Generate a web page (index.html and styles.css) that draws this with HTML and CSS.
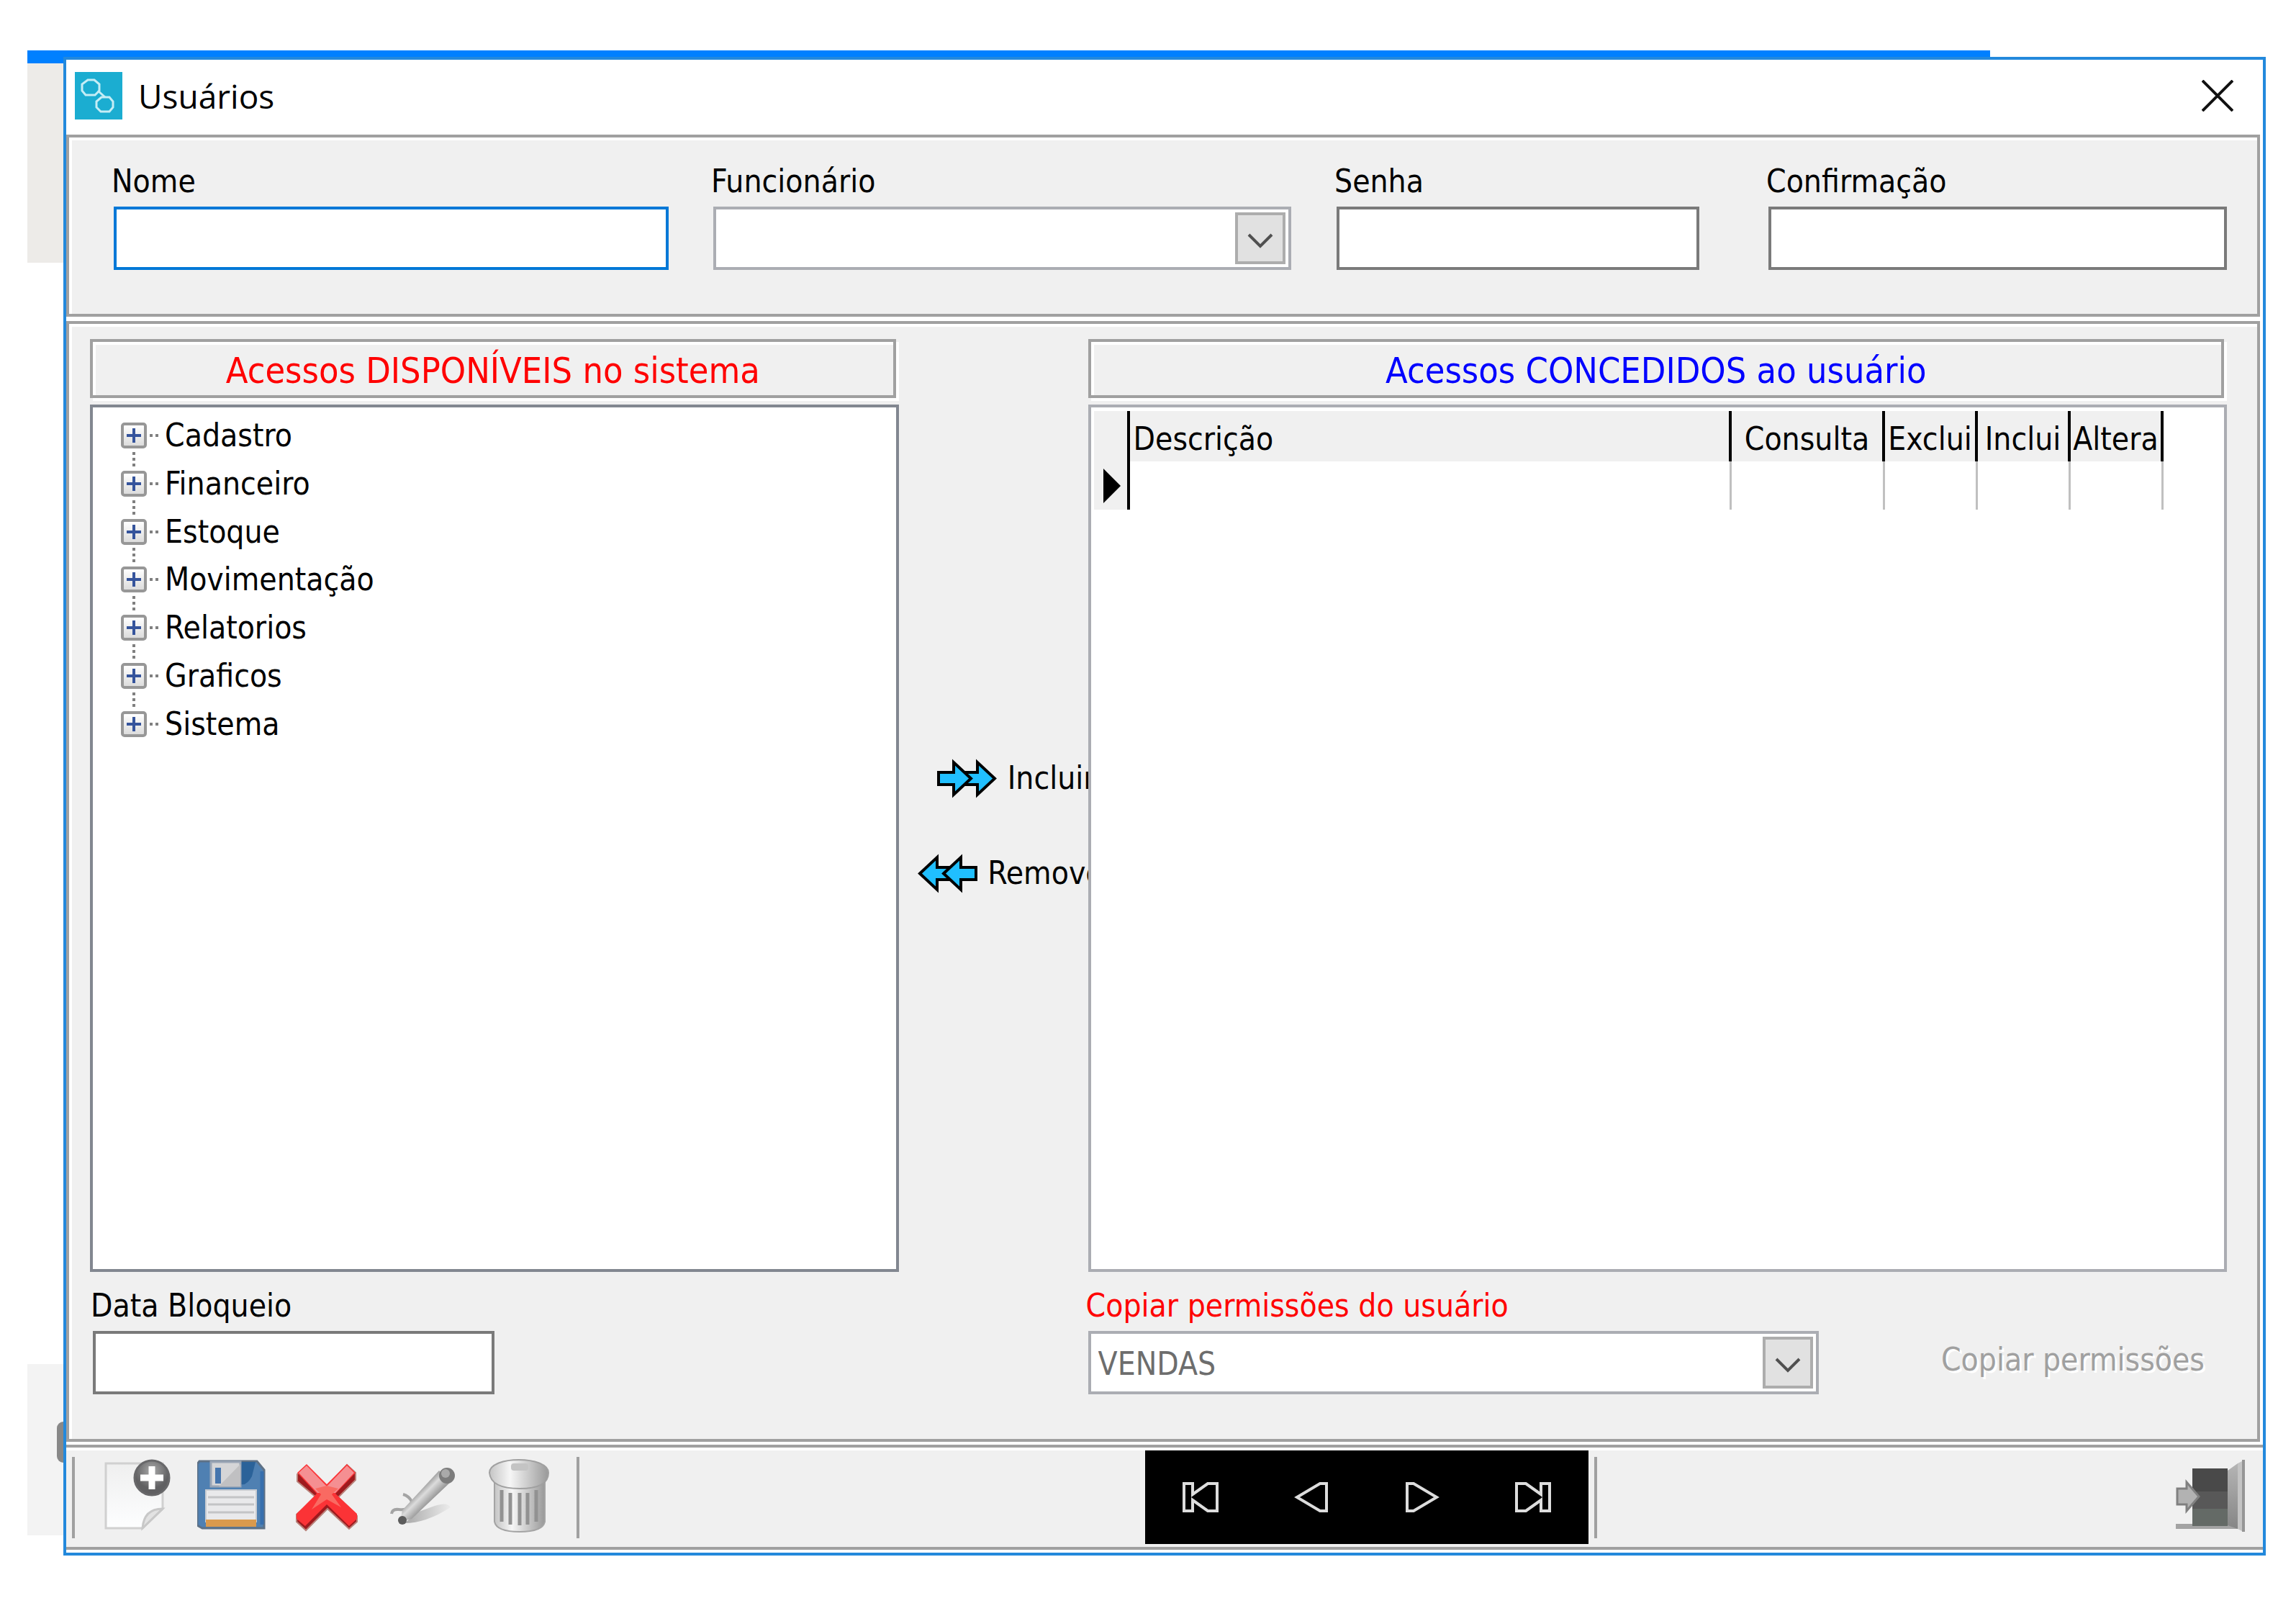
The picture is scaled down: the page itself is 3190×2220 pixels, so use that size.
FILE: index.html
```html
<!DOCTYPE html>
<html lang="pt-BR">
<head>
<meta charset="utf-8">
<title>Usuários</title>
<link rel="stylesheet" href="styles.css">
</head>
<body>
<div class="backdrop" aria-hidden="true">
  <div class="backdrop-bar"></div>
  <div class="backdrop-ribbon"></div>
  <div class="backdrop-footer"><span class="backdrop-knob"></span></div>
</div>

<main class="window">
  <header class="titlebar">
    <svg class="logo" viewBox="0 0 66 66" aria-hidden="true">
      <rect width="66" height="66" fill="#1badd1"/>
      <g fill="none" stroke="#c5edf5" stroke-width="3">
        <path d="M18 11h9l7 6v9l-6 6H15l-5-6v-9z"/>
        <path d="M37 35h11l5 6v8l-5 6H36l-6-6v-8z"/>
        <path d="M32 26l10 9"/>
      </g>
    </svg>
    <h1 class="title">Usuários</h1>
    <button class="close" type="button" aria-label="Fechar">
      <svg viewBox="0 0 44 44"><path d="M1 1L43 43M43 1L1 43" stroke="#111" stroke-width="4" fill="none"/></svg>
    </button>
  </header>

  <section class="panel user-fields">
    <div class="field field-name">
      <label for="nome">Nome</label>
      <input id="nome" class="box focused" type="text">
    </div>
    <div class="field field-employee">
      <label for="func">Funcionário</label>
      <div class="combo box">
        <select id="func"><option></option></select>
        <span class="combo-arrow"><svg viewBox="0 0 36 22"><path d="M2 3L18 19L34 3" stroke="#505050" stroke-width="4" fill="none"/></svg></span>
      </div>
    </div>
    <div class="field field-password">
      <label for="senha">Senha</label>
      <input id="senha" class="box" type="password">
    </div>
    <div class="field field-confirm">
      <label for="conf">Confirmação</label>
      <input id="conf" class="box" type="password">
    </div>
  </section>

  <section class="panel access">
    <h2 class="caption caption-available">Acessos DISPONÍVEIS no sistema</h2>
    <h2 class="caption caption-granted">Acessos CONCEDIDOS ao usuário</h2>

    <div class="tree">
      <ul class="tree-list">
        <li><button type="button" class="expander" aria-label="Expandir Cadastro"></button>Cadastro</li>
        <li><button type="button" class="expander" aria-label="Expandir Financeiro"></button>Financeiro</li>
        <li><button type="button" class="expander" aria-label="Expandir Estoque"></button>Estoque</li>
        <li><button type="button" class="expander" aria-label="Expandir Movimentação"></button>Movimentação</li>
        <li><button type="button" class="expander" aria-label="Expandir Relatorios"></button>Relatorios</li>
        <li><button type="button" class="expander" aria-label="Expandir Graficos"></button>Graficos</li>
        <li><button type="button" class="expander" aria-label="Expandir Sistema"></button>Sistema</li>
      </ul>
    </div>

    <div class="transfer">
      <button type="button" class="transfer-button">
        <svg viewBox="0 0 84 55" fill="#20bfff" stroke="#000" stroke-width="4">
          <path d="M35 19H56V5L80 27.500L56 50V36H35z"/>
          <path d="M2 19H23V5L47 27.500L23 50V36H2z"/>
        </svg>Incluir
      </button>
      <button type="button" class="transfer-button">
        <svg viewBox="0 0 84 55" fill="#20bfff" stroke="#000" stroke-width="4">
          <path d="M49 19H28V5L4 27.500L28 50V36H49z"/>
          <path d="M82 19H61V5L37 27.500L61 50V36H82z"/>
        </svg>Remover
      </button>
    </div>

    <div class="grid">
      <table>
        <colgroup><col class="col-mark"><col><col class="col-wide"><col class="col-flag"><col class="col-flag"><col class="col-flag"></colgroup>
        <thead>
          <tr><td class="mark"></td><th class="first">Descrição</th><th>Consulta</th><th>Exclui</th><th>Inclui</th><th>Altera</th></tr>
        </thead>
        <tbody>
          <tr><td class="mark"><svg viewBox="0 0 24 48"><path d="M0 0L24 24L0 48z"/></svg></td><td></td><td></td><td></td><td></td><td></td></tr>
        </tbody>
      </table>
    </div>

    <div class="field field-block">
      <label for="bloq">Data Bloqueio</label>
      <input id="bloq" class="box" type="text">
    </div>

    <div class="copy">
      <div class="field field-copy">
        <label class="red" for="copia">Copiar permissões do usuário</label>
        <div class="combo box">
          <select id="copia" disabled><option>VENDAS</option></select>
          <span class="combo-arrow"><svg viewBox="0 0 36 22"><path d="M2 3L18 19L34 3" stroke="#505050" stroke-width="4" fill="none"/></svg></span>
        </div>
      </div>
      <button type="button" class="copy-button" disabled>Copiar permissões</button>
    </div>
  </section>

  <footer class="toolbar">
    <span class="separator"></span>
    <div class="tools">
      <button type="button" aria-label="Novo">
        <svg viewBox="0 0 100 108">
          <defs>
            <linearGradient id="paper" x1="0" y1="0" x2="0" y2="1"><stop offset="0" stop-color="#efefef"/><stop offset="1" stop-color="#fdfeff"/></linearGradient>
            <radialGradient id="knob" cy=".3"><stop offset="0" stop-color="#aaa"/><stop offset="1" stop-color="#606062"/></radialGradient>
          </defs>
          <path d="M7 7H86V70L58 97H7z" fill="url(#paper)" stroke="#d0d0d0" stroke-width="3"/>
          <path d="M58 97Q60 70 86 70z" fill="#e2e2e2" stroke="#c8c8c8" stroke-width="3"/>
          <circle cx="71" cy="27" r="24" fill="url(#knob)" stroke="#68686a" stroke-width="3"/>
          <path d="M71 11V43M55 27H87" stroke="#fff" stroke-width="9"/>
        </svg>
      </button>
      <button type="button" aria-label="Salvar">
        <svg viewBox="0 0 100 108">
          <path d="M3 4H83L93 16V97H7L0 93V8z" fill="#4f80b2" stroke="#5e7186" stroke-width="3"/>
          <path d="M61 5H81L76 25Q69 38 61 36z" fill="#2b6299"/>
          <path d="M90 18V92" stroke="#376fae" stroke-width="5"/>
          <path d="M19 5H60V39H19z" fill="#d5d5d7" stroke="#9ba6b6" stroke-width="3"/>
          <path d="M30 39L60 8V39z" fill="#c0c0c2"/>
          <rect x="25" y="13" width="8" height="22" fill="#4675ad"/>
          <rect x="12" y="44" width="70" height="44" fill="#e9e9eb" stroke="#c8ccd2" stroke-width="2"/>
          <path d="M15 54H79M15 64H79M15 75H79" stroke="#c3c4c6" stroke-width="3"/>
          <rect x="12" y="85" width="70" height="10" fill="#da9a4d"/>
        </svg>
      </button>
      <button type="button" aria-label="Cancelar">
        <svg viewBox="0 0 100 108">
          <path d="M5 22L18 11L46 39L74 9L86 20V30L62 54L88 80V88L77 98L47 70L17 100L4 88V78L31 54L5 32z" fill="#9e1a1e" stroke="#b98078" stroke-width="2"/>
          <path d="M5 20L18 8L46 36L74 8L86 20L58 49L88 77V84L77 94L46 64L16 94L4 84V77L32 49z" fill="#fb3336"/>
          <path d="M7 20L18 10L46 39L74 10L84 20L58 48H33z" fill="#f58f92"/>
          <path d="M30 42L46 38L62 42L53 50L66 68L46 57L25 71L38 50z" fill="#f96a62"/>
        </svg>
      </button>
      <button type="button" aria-label="Editar">
        <svg viewBox="0 0 100 108">
          <defs>
            <linearGradient id="pen" gradientUnits="userSpaceOnUse" x1="40" y1="44" x2="56" y2="60"><stop offset="0" stop-color="#9c9c9c"/><stop offset=".4" stop-color="#dcdcdc"/><stop offset="1" stop-color="#989898"/></linearGradient>
            <linearGradient id="shade"><stop offset="0" stop-color="#a8a8a8"/><stop offset="1" stop-color="#ececec"/></linearGradient>
          </defs>
          <path d="M20 90Q50 90 84 68Q80 60 62 66L40 74z" fill="url(#shade)"/>
          <path d="M2 77Q3 70 12 71Q30 73 30 60Q26 52 18 50" fill="none" stroke="#a4a4a4" stroke-width="4"/>
          <path d="M68 17L86 31L30 84L14 88L17 72z" fill="url(#pen)"/>
          <circle cx="79" cy="24" r="11" fill="#7c7c7c"/>
          <circle cx="77" cy="21" r="6" fill="#aaa"/>
          <circle cx="17" cy="86" r="6" fill="#5c5c5c"/>
        </svg>
      </button>
      <button type="button" aria-label="Excluir">
        <svg viewBox="0 0 100 108">
          <defs><linearGradient id="bin"><stop offset="0" stop-color="#c4c4c4"/><stop offset=".35" stop-color="#f6f6f6"/><stop offset="1" stop-color="#999"/></linearGradient></defs>
          <path d="M11 32H81V88Q78 102 46 102T11 88z" fill="url(#bin)" stroke="#a4a4a4" stroke-width="2"/>
          <path d="M21 44V88M33 48V92M46 48V93M57 48V92M69 44V88" stroke="#929292" stroke-width="5"/>
          <path d="M4 20C4 -4 86 -4 86 20Q86 42 46 42T4 20z" fill="url(#bin)" stroke="#a0a0a0" stroke-width="2"/>
          <rect x="34" y="7" width="24" height="10" rx="4" fill="#c4c4c4"/>
        </svg>
      </button>
    </div>
    <span class="separator"></span>
    <nav class="navigator" aria-label="Registros">
      <button type="button" aria-label="Primeiro"><svg viewBox="0 0 52 42"><path d="M3 2H15V17L36 2H49V40H36L15 25V40H3z"/></svg></button>
      <button type="button" aria-label="Anterior"><svg viewBox="0 0 52 42"><path d="M47 2H38L6 21L38 40H47z"/></svg></button>
      <button type="button" aria-label="Próximo"><svg viewBox="0 0 52 42"><path d="M5 2H14L46 21L14 40H5z"/></svg></button>
      <button type="button" aria-label="Último"><svg viewBox="0 0 52 42"><path d="M49 2H37V17L16 2H3V40H16L37 25V40H49z"/></svg></button>
    </nav>
    <span class="separator"></span>
    <button type="button" class="exit" aria-label="Sair">
      <svg viewBox="0 0 100 108">
        <defs><linearGradient id="door" x1="0" y1="0" x2="0" y2="1"><stop offset="0" stop-color="#b5b5b5"/><stop offset="1" stop-color="#858585"/></linearGradient></defs>
        <path d="M0 91H92V98H0z" fill="#a3a3a3"/>
        <rect x="23" y="14" width="49" height="34" fill="#494949"/>
        <rect x="23" y="46" width="49" height="26" fill="#585858"/>
        <rect x="23" y="70" width="49" height="24" fill="#646a66"/>
        <path d="M72 17L86 7V98L72 93z" fill="url(#door)"/>
        <path d="M86 7L92 4V101L86 98z" fill="#c4c4c4"/>
        <rect x="92" y="2" width="4" height="100" fill="#969696"/>
        <path d="M2 42H15V33L32 53L15 73V64H2z" fill="#b2b2b2" stroke="#808080" stroke-width="3"/>
      </svg>
    </button>
  </footer>
</main>
</body>
</html>
```
FILE: styles.css
```css
* { box-sizing: border-box; }

:root {
  --face: #f0f0f0;
  --line: #a0a0a0;
  --accent: #0078d7;
}

body {
  margin: 0;
  min-height: 100vh;
  padding: 79px 42px 59px 88px;
  display: flex;
  position: relative;
  background: #fff;
  color: #000;
  font-family: "DejaVu Sans Condensed", "Liberation Sans", sans-serif;
  font-size: 44px;
  line-height: 56px;
}

button, input, select { font: inherit; color: inherit; }
button { background: none; border: 0; padding: 0; }
svg { display: block; flex: none; }
h1, h2, ul { margin: 0; padding: 0; font-weight: normal; }

/* Application window partly hidden behind the dialog */
.backdrop-bar, .backdrop-ribbon, .backdrop-footer { position: absolute; left: 38px; }
.backdrop-bar { top: 70px; right: 425px; height: 18px; background: #0080ff; }
.backdrop-ribbon { top: 88px; width: 50px; height: 277px; background: #edebe8; }
.backdrop-footer { bottom: 87px; width: 50px; height: 238px; background: #f3f3f3; }
.backdrop-knob {
  position: absolute;
  right: 0;
  top: 80px;
  width: 9px;
  height: 57px;
  border-radius: 9px 0 0 9px;
  background: #888;
}

.window {
  position: relative;
  flex: 1;
  min-width: 0;
  display: flex;
  flex-direction: column;
  border: 4px solid #2389dc;
  background: #fff;
}

.titlebar {
  display: flex;
  align-items: center;
  height: 104px;
  padding: 0 41px 5px 12px;
}
.logo { width: 66px; height: 66px; }
.title {
  flex: 1;
  margin-left: 22px;
  font-family: "Open Sans", "Noto Sans", sans-serif;
  font-size: 46px;
}
.close svg { width: 44px; height: 44px; }

.panel {
  margin-right: 4px;
  border: 4px solid var(--line);
  background: var(--face);
  box-shadow: inset 4px 4px #fff, 4px 4px #fff;
}

.user-fields {
  display: flex;
  margin-bottom: 6px;
  padding: 33px 42px 61px 62px;
}
.field { display: flex; flex-direction: column; gap: 7px; }
.field label { margin-left: -3px; }
.field-name { flex: 771 1 0; }
.field-employee { flex: 803 1 0; margin-left: 62px; }
.field-password { flex: 504 1 0; margin-left: 63px; }
.field-confirm { flex: 637 1 0; margin-left: 96px; }

.box {
  width: 100%;
  height: 88px;
  border: 4px solid #7a7a7a;
  border-radius: 0;
  background: #fff;
  padding: 0 12px;
  outline: 0;
}
.box.focused { border-color: var(--accent); }
.combo { position: relative; padding: 0; border-color: #abadb3; }
.combo select {
  appearance: none;
  width: 100%;
  height: 100%;
  border: 0;
  padding: 4px 84px 0 10px;
  background: none;
  outline: 0;
}
.combo select:disabled { color: #6d6d6d; opacity: 1; }
.combo-arrow {
  position: absolute;
  top: 4px;
  right: 4px;
  bottom: 4px;
  width: 70px;
  display: grid;
  place-items: center;
  padding-top: 6px;
  border: 4px solid #adadad;
  background: #e1e1e1;
  pointer-events: none;
}
.combo-arrow svg { width: 36px; height: 22px; }

.access {
  flex: 1;
  display: grid;
  grid-template-columns: 1124fr 263px 1583fr;
  grid-template-rows: 82px 1fr auto;
  row-gap: 9px;
  margin-bottom: 4px;
  padding: 21px 42px 62px 29px;
}
.caption {
  margin-right: 4px;
  border: 4px solid var(--line);
  box-shadow: inset 4px 4px #fff, 4px 4px #fff;
  line-height: 80px;
  font-size: 50px;
  text-align: center;
}
.caption-available { grid-column: 1; color: #f00; }
.caption-granted { grid-column: 3; color: #00f; }

.tree {
  grid-column: 1;
  border: 4px solid #828790;
  background: #fff;
  padding: 6px 39px;
}
.tree-list {
  display: grid;
  grid-auto-rows: 1fr;
  height: 467px;
  list-style: none;
}
.tree-list li {
  position: relative;
  display: flex;
  align-items: center;
  gap: 25px;
}
/* dotted guides: two dots towards the text, three towards the next node */
.tree-list li::before {
  content: "";
  position: absolute;
  left: 40px;
  width: 12px;
  height: 4px;
  background: repeating-linear-gradient(90deg, #808080 0 4px, transparent 4px 8px);
}
.tree-list li:not(:last-child)::after {
  content: "";
  position: absolute;
  left: 16px;
  top: 56px;
  width: 4px;
  height: 20px;
  background: repeating-linear-gradient(#808080 0 4px, transparent 4px 8px);
}
.expander {
  width: 36px;
  height: 36px;
  border: 4px solid #979797;
  border-radius: 5px;
  background:
    linear-gradient(#35549c, #35549c) center / 20px 4px no-repeat,
    linear-gradient(#35549c, #35549c) center / 4px 20px no-repeat,
    linear-gradient(#fff, #dcdcdc);
}

.transfer {
  grid-column: 2;
  overflow: hidden;
  padding-top: 453px;
}
.transfer-button {
  display: flex;
  align-items: center;
  justify-content: center;
  gap: 14px;
  width: 326px;
  height: 132px;
}
.transfer-button svg { width: 84px; height: 55px; }

.grid {
  grid-column: 3;
  border: 4px solid #abadb3;
  background: #fff;
  padding: 5px 84px 5px 4px;
}
table { width: 100%; table-layout: fixed; border-spacing: 0; }
.col-mark { width: 50px; }
.col-wide { width: 213px; }
.col-flag { width: 129px; }
th, td { padding: 0; height: 67px; border-right: 3px solid #c0c0c0; }
th, thead td {
  height: 70px;
  padding-top: 8px;
  border-right: 4px solid #000;
  background: var(--face);
  font-weight: normal;
}
th.first { padding-left: 5px; text-align: left; }
td.mark { padding-left: 13px; border-right: 4px solid #000; background: var(--face); }
.mark svg { width: 24px; height: 48px; }

.field-block { grid-column: 1; width: 558px; margin-left: 4px; padding-top: 10px; }
.copy {
  grid-column: 3;
  display: flex;
  align-items: flex-end;
  justify-content: space-between;
  padding-top: 10px;
}
.field-copy { flex: 0 1 1015px; }
.red { color: #f00; }
.copy-button { height: 96px; padding-right: 31px; color: #a0a0a0; text-shadow: 3px 3px #fff; }

.toolbar {
  display: flex;
  align-items: center;
  height: 146px;
  margin-bottom: 4px;
  padding: 0 21px 0 8px;
  border: solid var(--line);
  border-width: 4px 0;
  background: var(--face);
  box-shadow: inset 0 4px #fff, 0 4px #fff;
}
.separator { width: 4px; height: 113px; background: var(--line); }
.tools { display: flex; flex: none; gap: 34px; padding: 0 25px 0 36px; }
.tools svg, .exit svg { width: 100px; height: 108px; }
.navigator { display: flex; margin: 0 8px 0 auto; background: #000; }
.navigator button { display: grid; place-items: center; width: 154px; height: 130px; }
.navigator svg { width: 52px; height: 42px; fill: none; stroke: #ddd; stroke-width: 4px; }
.exit { margin-left: 804px; }
```
